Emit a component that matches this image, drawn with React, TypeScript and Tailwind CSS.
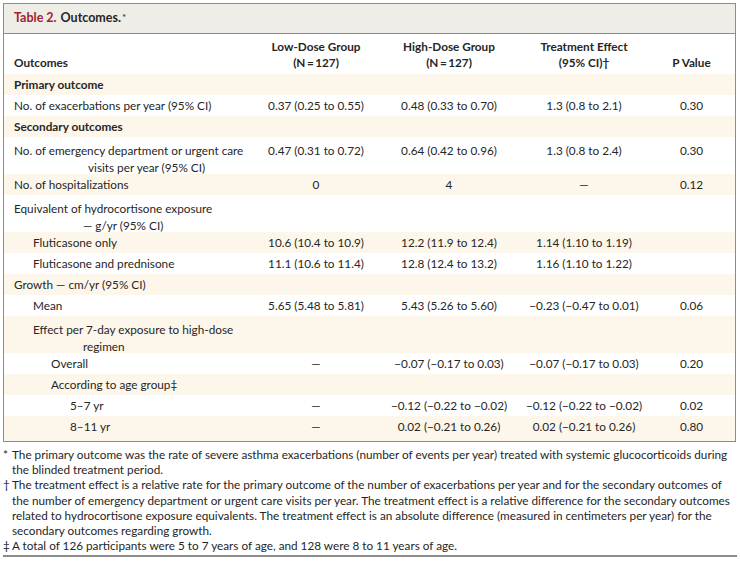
const font = { fontFamily: 'Lato, "Open Sans", sans-serif' };

type Row = {
  label: string[];
  indent: number;
  cont?: number;
  bold?: boolean;
  low?: string;
  high?: string;
  effect?: string;
  p?: string;
  shaded?: boolean;
};

const rows: Row[] = [
  { label: ['Primary outcome'], indent: 0, bold: true, shaded: true },
  { label: ['No. of exacerbations per year (95% CI)'], indent: 0, low: '0.37 (0.25 to 0.55)', high: '0.48 (0.33 to 0.70)', effect: '1.3 (0.8 to 2.1)', p: '0.30' },
  { label: ['Secondary outcomes'], indent: 0, bold: true, shaded: true },
  { label: ['No. of emergency department or urgent care', 'visits per year (95% CI)'], indent: 0, cont: 74, low: '0.47 (0.31 to 0.72)', high: '0.64 (0.42 to 0.96)', effect: '1.3 (0.8 to 2.4)', p: '0.30' },
  { label: ['No. of hospitalizations'], indent: 0, low: '0', high: '4', effect: '—', p: '0.12', shaded: true },
  { label: ['Equivalent of hydrocortisone exposure', '— g/yr (95% CI)'], indent: 0, cont: 69 },
  { label: ['Fluticasone only'], indent: 19, low: '10.6 (10.4 to 10.9)', high: '12.2 (11.9 to 12.4)', effect: '1.14 (1.10 to 1.19)', shaded: true },
  { label: ['Fluticasone and prednisone'], indent: 19, low: '11.1 (10.6 to 11.4)', high: '12.8 (12.4 to 13.2)', effect: '1.16 (1.10 to 1.22)' },
  { label: ['Growth — cm/yr (95% CI)'], indent: 0, shaded: true },
  { label: ['Mean'], indent: 19, low: '5.65 (5.48 to 5.81)', high: '5.43 (5.26 to 5.60)', effect: '−0.23 (−0.47 to 0.01)', p: '0.06' },
  { label: ['Effect per 7-day exposure to high-dose', 'regimen'], indent: 19, cont: 50, shaded: true },
  { label: ['Overall'], indent: 37, low: '—', high: '−0.07 (−0.17 to 0.03)', effect: '−0.07 (−0.17 to 0.03)', p: '0.20' },
  { label: ['According to age group‡'], indent: 37, shaded: true },
  { label: ['5–7 yr'], indent: 56, low: '—', high: '−0.12 (−0.22 to −0.02)', effect: '−0.12 (−0.22 to −0.02)', p: '0.02' },
  { label: ['8–11 yr'], indent: 56, low: '—', high: '0.02 (−0.21 to 0.26)', effect: '0.02 (−0.21 to 0.26)', p: '0.80', shaded: true },
];

const grid = 'grid grid-cols-[248px_128px_138px_132px_1fr]';

function DataRow({ row }: { row: Row }) {
  const two = row.label.length > 1;
  return (
    <div className={`${grid} ${row.shaded ? 'bg-[#fdf6ea]' : 'bg-white'} ${two ? 'h-[37px] pt-[3px]' : 'h-[21px]'} items-start`}>
      <div className={`pl-[10px] ${row.bold ? 'font-bold' : ''} leading-[17px] pt-[2px]`}>
        <div style={{ paddingLeft: row.indent }}>{row.label[0]}</div>
        {two && <div style={{ paddingLeft: row.indent + (row.cont ?? 0) }}>{row.label[1]}</div>}
      </div>
      <div className="text-center leading-[17px] pt-[2px]">{row.low}</div>
      <div className="text-center leading-[17px] pt-[2px]">{row.high}</div>
      <div className="text-center leading-[17px] pt-[2px]">{row.effect}</div>
      <div className="text-center leading-[17px] pt-[2px] pr-[2px]">{row.p}</div>
    </div>
  );
}

export default function App() {
  return (
    <div className="w-[740px] h-[563px] bg-white text-[#262626] text-[11.75px] overflow-hidden" style={font}>
      <div className="ml-[3px] mr-[4px] mt-[3px] border border-[#8c8c8c]">
        <div className="h-[30px] bg-[#efede8] border-b border-[#8c8c8c] flex items-center pl-[10px] text-[12.5px]">
          <span className="font-bold text-[#a3232f]">Table 2.</span>
          <span className="font-bold ml-[4px]">Outcomes.</span>
          <span className="text-[10px] self-start mt-[6px] ml-[1px]">*</span>
        </div>
        <div className={`${grid} h-[40px] items-end pb-[3px] font-bold leading-[16px]`}>
          <div className="pl-[10px]">Outcomes</div>
          <div className="text-center">Low-Dose Group<br />(N{'\u2009'}={'\u2009'}127)</div>
          <div className="text-center">High-Dose Group<br />(N{'\u2009'}={'\u2009'}127)</div>
          <div className="text-center">Treatment Effect<br />(95% CI)†</div>
          <div className="text-center pr-[2px]">P Value</div>
        </div>
        {rows.map((r, i) => (
          <DataRow key={i} row={r} />
        ))}
        <div className="h-[4px] bg-[#fdf6ea]" />
      </div>
      <div className="mx-[3px] mt-[5px] leading-[15.2px]">
        <div className="flex">
          <span className="w-[9px] shrink-0">*</span>
          <span>The primary outcome was the rate of severe asthma exacerbations (number of events per year) treated with systemic glucocorticoids during the blinded treatment period.</span>
        </div>
        <div className="flex">
          <span className="w-[9px] shrink-0">†</span>
          <span>The treatment effect is a relative rate for the primary outcome of the number of exacerbations per year and for the secondary outcomes of the number of emergency department or urgent care visits per year. The treatment effect is a relative difference for the secondary outcomes related to hydrocortisone exposure equivalents. The treatment effect is an absolute difference (measured in centimeters per year) for the secondary outcomes regarding growth.</span>
        </div>
        <div className="flex">
          <span className="w-[9px] shrink-0">‡</span>
          <span>A total of 126 participants were 5 to 7 years of age, and 128 were 8 to 11 years of age.</span>
        </div>
      </div>
      <div className="mx-[3px] mt-[2px] h-[2px] bg-[#8c8c8c]" />
    </div>
  );
}
